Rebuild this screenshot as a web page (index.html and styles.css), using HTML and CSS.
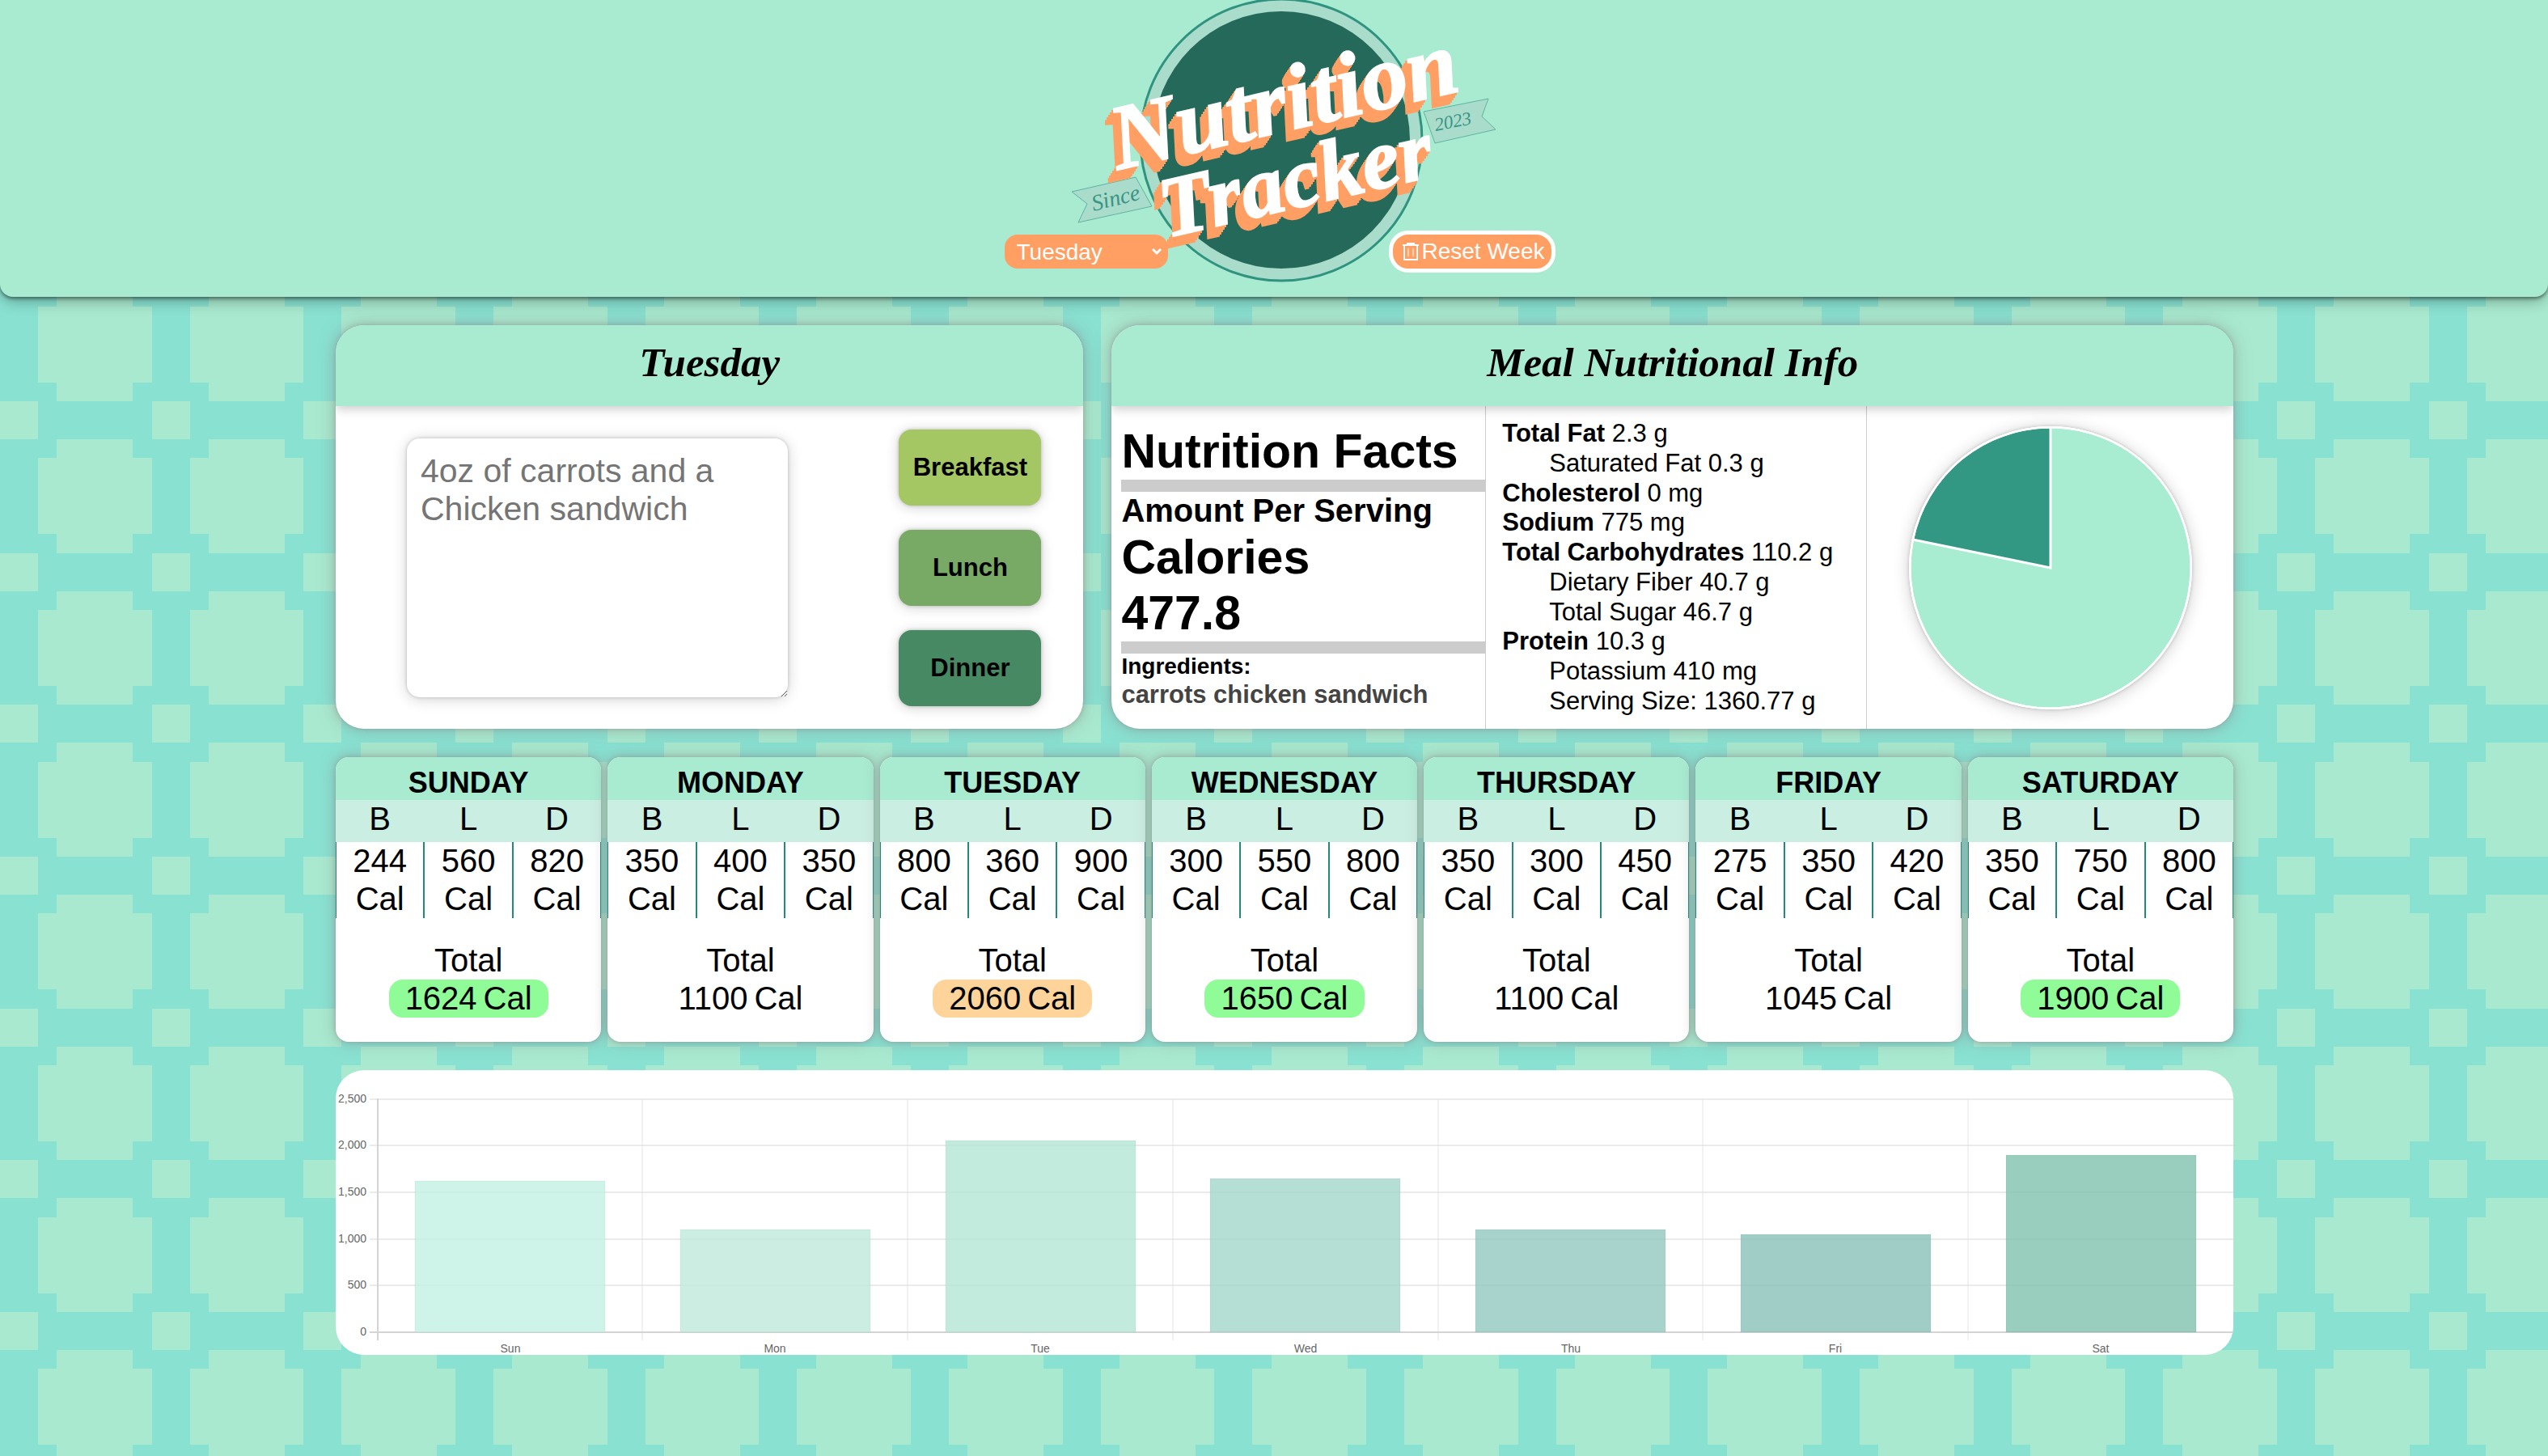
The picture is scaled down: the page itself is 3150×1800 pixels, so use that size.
FILE: index.html
```html
<!DOCTYPE html>
<html lang="en">
<head>
  <meta charset="utf-8">
  <meta name="viewport" content="width=device-width, initial-scale=1">
  <title>Nutrition Tracker</title>
  <link rel="stylesheet" href="styles.css">
</head>
<body>
  <header class="site-header">
    <svg class="logo" viewBox="1405 0 354 349" role="img" aria-label="Nutrition Tracker, since 2023">
      <g class="ribbon">
        <path d="M1325 237 L1404 219 L1424 255 L1333 275 L1344 252 Z"/>
        <path d="M1760 138 L1840 122 L1832 144 L1849 160 L1774 177 Z"/>
      </g>
      <circle class="logo-ring" cx="1584" cy="173" r="174"/>
      <circle class="logo-disc" cx="1584" cy="173" r="159"/>
      <g class="logo-word">
        <text font-size="114" transform="translate(1382 210) rotate(-13)">Nutrition</text>
        <text font-size="106" transform="translate(1442 294) rotate(-13)">Tracker</text>
      </g>
      <text class="logo-small" font-size="28" transform="translate(1352 261) rotate(-14)">Since</text>
      <text class="logo-small" font-size="23" transform="translate(1775 162) rotate(-11)">2023</text>
    </svg>
    <div class="controls">
      <select class="day-select" aria-label="Day">
        <option>Sunday</option>
        <option>Monday</option>
        <option selected>Tuesday</option>
        <option>Wednesday</option>
        <option>Thursday</option>
        <option>Friday</option>
        <option>Saturday</option>
      </select>
      <button class="reset" type="button">
        <svg class="reset-icon" viewBox="0 0 20 22" aria-hidden="true">
          <path d="M0 3H20M6 3V1H14V3M2 3V21H18V3"/>
          <path class="reset-slots" d="M7 7V17M13 7V17"/>
        </svg>
        Reset Week
      </button>
    </div>
  </header>

  <main class="page">
    <div class="top-row">
      <section class="card">
        <h2 class="card-title">Tuesday</h2>
        <form class="entry">
          <textarea class="meal-input" aria-label="Meal" placeholder="4oz of carrots and a Chicken sandwich"></textarea>
          <div class="meal-buttons">
            <button class="meal-button breakfast" type="button">Breakfast</button>
            <button class="meal-button lunch" type="button">Lunch</button>
            <button class="meal-button dinner" type="button">Dinner</button>
          </div>
        </form>
      </section>

      <section class="card">
        <h2 class="card-title">Meal Nutritional Info</h2>
        <div class="info">
          <div class="facts">
            <h3 class="facts-big facts-rule">Nutrition Facts</h3>
            <p class="facts-medium">Amount Per Serving</p>
            <p class="facts-big">Calories</p>
            <p class="facts-big facts-rule">477.8</p>
            <p class="facts-small">Ingredients:</p>
            <p class="facts-list">carrots chicken sandwich</p>
          </div>
          <ul class="nutrients">
            <li><b>Total Fat</b> 2.3 g</li>
            <li class="sub">Saturated Fat 0.3 g</li>
            <li><b>Cholesterol</b> 0 mg</li>
            <li><b>Sodium</b> 775 mg</li>
            <li><b>Total Carbohydrates</b> 110.2 g</li>
            <li class="sub">Dietary Fiber 40.7 g</li>
            <li class="sub">Total Sugar 46.7 g</li>
            <li><b>Protein</b> 10.3 g</li>
            <li class="sub">Potassium 410 mg</li>
            <li class="sub">Serving Size: 1360.77 g</li>
          </ul>
          <div class="pie-cell">
            <svg class="pie" viewBox="0 0 350 350" role="img" aria-label="Calories chart">
              <circle cx="175" cy="175" r="174" fill="#a8ecd2"/>
              <path d="M175 175 L4.6 140 A174 174 0 0 1 175 1 Z" fill="#329883"/>
              <circle cx="175" cy="175" r="174" fill="none"/>
            </svg>
          </div>
        </div>
      </section>
    </div>

    <div class="week">
      <section class="day">
        <h3 class="day-name">SUNDAY</h3>
        <table class="meals">
          <thead><tr><th>B</th><th>L</th><th>D</th></tr></thead>
          <tbody><tr><td>244<br>Cal</td><td>560<br>Cal</td><td>820<br>Cal</td></tr></tbody>
        </table>
        <p class="total-label">Total</p>
        <p class="total good"><span>1624</span><span>Cal</span></p>
      </section>
      <section class="day">
        <h3 class="day-name">MONDAY</h3>
        <table class="meals">
          <thead><tr><th>B</th><th>L</th><th>D</th></tr></thead>
          <tbody><tr><td>350<br>Cal</td><td>400<br>Cal</td><td>350<br>Cal</td></tr></tbody>
        </table>
        <p class="total-label">Total</p>
        <p class="total"><span>1100</span><span>Cal</span></p>
      </section>
      <section class="day">
        <h3 class="day-name">TUESDAY</h3>
        <table class="meals">
          <thead><tr><th>B</th><th>L</th><th>D</th></tr></thead>
          <tbody><tr><td>800<br>Cal</td><td>360<br>Cal</td><td>900<br>Cal</td></tr></tbody>
        </table>
        <p class="total-label">Total</p>
        <p class="total over"><span>2060</span><span>Cal</span></p>
      </section>
      <section class="day">
        <h3 class="day-name">WEDNESDAY</h3>
        <table class="meals">
          <thead><tr><th>B</th><th>L</th><th>D</th></tr></thead>
          <tbody><tr><td>300<br>Cal</td><td>550<br>Cal</td><td>800<br>Cal</td></tr></tbody>
        </table>
        <p class="total-label">Total</p>
        <p class="total good"><span>1650</span><span>Cal</span></p>
      </section>
      <section class="day">
        <h3 class="day-name">THURSDAY</h3>
        <table class="meals">
          <thead><tr><th>B</th><th>L</th><th>D</th></tr></thead>
          <tbody><tr><td>350<br>Cal</td><td>300<br>Cal</td><td>450<br>Cal</td></tr></tbody>
        </table>
        <p class="total-label">Total</p>
        <p class="total"><span>1100</span><span>Cal</span></p>
      </section>
      <section class="day">
        <h3 class="day-name">FRIDAY</h3>
        <table class="meals">
          <thead><tr><th>B</th><th>L</th><th>D</th></tr></thead>
          <tbody><tr><td>275<br>Cal</td><td>350<br>Cal</td><td>420<br>Cal</td></tr></tbody>
        </table>
        <p class="total-label">Total</p>
        <p class="total"><span>1045</span><span>Cal</span></p>
      </section>
      <section class="day">
        <h3 class="day-name">SATURDAY</h3>
        <table class="meals">
          <thead><tr><th>B</th><th>L</th><th>D</th></tr></thead>
          <tbody><tr><td>350<br>Cal</td><td>750<br>Cal</td><td>800<br>Cal</td></tr></tbody>
        </table>
        <p class="total-label">Total</p>
        <p class="total good"><span>1900</span><span>Cal</span></p>
      </section>
    </div>

    <section class="chart">
      <svg class="chart-plot" viewBox="0 0 2346 352" role="img" aria-label="Calories per day">
        <g class="grid-lines">
          <path d="M42 36H2346M42 93H2346M42 151H2346M42 209H2346M42 266H2346"/>
          <path class="thin" d="M379 35V334M707 35V334M1035 35V334M1363 35V334M1690 35V334M2018 35V334"/>
        </g>
        <path class="axis" d="M42 324H2346M52 35V334"/>
        <g class="bars">
          <rect x="98" y="137" width="235" height="187" fill="#c2f1e3"/>
          <rect x="426" y="197" width="235" height="127" fill="#bfeadb"/>
          <rect x="754" y="87" width="235" height="237" fill="#b4e6d5"/>
          <rect x="1081" y="134" width="235" height="190" fill="#a3d7c9"/>
          <rect x="1409" y="197" width="235" height="127" fill="#91c8bf"/>
          <rect x="1737" y="203" width="235" height="121" fill="#88c2b9"/>
          <rect x="2065" y="105" width="235" height="219" fill="#80c1ae"/>
        </g>
        <g class="labels-y">
          <text x="38" y="40">2,500</text>
          <text x="38" y="97">2,000</text>
          <text x="38" y="155">1,500</text>
          <text x="38" y="213">1,000</text>
          <text x="38" y="270">500</text>
          <text x="38" y="328">0</text>
        </g>
        <g class="labels-x">
          <text x="216" y="349">Sun</text>
          <text x="543" y="349">Mon</text>
          <text x="871" y="349">Tue</text>
          <text x="1199" y="349">Wed</text>
          <text x="1527" y="349">Thu</text>
          <text x="1854" y="349">Fri</text>
          <text x="2182" y="349">Sat</text>
        </g>
      </svg>
    </section>
  </main>
</body>
</html>
```
FILE: styles.css
```css
* {
  box-sizing: border-box;
}

body {
  margin: 0;
  min-height: 100vh;
  color: #000;
  font-family: "Liberation Sans", Arial, sans-serif;
  background-color: #89e1d1;
  background-image: url("data:image/svg+xml,%3Csvg xmlns='http://www.w3.org/2000/svg' viewBox='0 0 24 24' shape-rendering='crispEdges'%3E%3Cdefs%3E%3Cpath id='t' fill='%23a8e9cf' d='M0 0h2v2H0zM3 2h4v1h1v4H7v1H3V7H2V3h1z'/%3E%3C/defs%3E%3Cuse href='%23t'/%3E%3Cuse href='%23t' x='8'/%3E%3Cuse href='%23t' x='16'/%3E%3Cuse href='%23t' y='8'/%3E%3Cuse href='%23t' x='8' y='8'/%3E%3Cuse href='%23t' x='16' y='8'/%3E%3Cuse href='%23t' y='16'/%3E%3Cuse href='%23t' x='8' y='16'/%3E%3Cuse href='%23t' x='16' y='16'/%3E%3C/svg%3E");
  background-size: 563px 563px;
  background-position: 0 496px;
}

h2, h3, p, ul {
  margin: 0;
  padding: 0;
}

button, select, textarea {
  font-family: inherit;
}

/* Header */

.site-header {
  display: grid;
  justify-items: center;
  padding: 0 0 18px 14px;
  background: #a8ebd1;
  border-radius: 0 0 16px 16px;
  box-shadow: 0 2px 4px rgba(0, 0, 0, 0.45), 0 7px 18px -2px rgba(0, 0, 0, 0.3);
}

.logo {
  grid-area: 1 / 1;
  width: 354px;
  height: 349px;
  overflow: visible;
}

.logo-ring {
  fill: #a9dccb;
  stroke: #2f9380;
  stroke-width: 3;
}

.logo-disc {
  fill: #25695a;
}

.ribbon {
  fill: #a9dccb;
  stroke: #5fb3a3;
  stroke-width: 1;
}

.logo-small {
  fill: #3a9483;
  font-family: "Liberation Serif", serif;
  font-style: italic;
}

.logo-word {
  fill: #fff;
  stroke: #fff;
  stroke-width: 2;
  font-family: "Liberation Serif", serif;
  font-style: italic;
  font-weight: 700;
  filter: drop-shadow(-2px 3px 0 #ff9f64) drop-shadow(-2px 3px 0 #ff9f64) drop-shadow(-2px 3px 0 #ff9f64) drop-shadow(-2px 3px 0 #ff9f64) drop-shadow(-2px 3px 0 #ff9f64);
}

.controls {
  grid-area: 1 / 1;
  align-self: end;
  display: flex;
  align-items: center;
  gap: 273px;
  margin-bottom: 12px;
  z-index: 1;
}

.day-select {
  width: 202px;
  height: 42px;
  padding: 0 15px;
  appearance: none;
  border: 0;
  border-radius: 16px;
  color: #fff;
  font-size: 28px;
  background: #ff9f64 url("data:image/svg+xml,%3Csvg xmlns='http://www.w3.org/2000/svg' viewBox='0 0 14 10'%3E%3Cpath d='M2 2l5 5 5-5' fill='none' stroke='white' stroke-width='3'/%3E%3C/svg%3E") no-repeat right 7px center / 14px 10px;
}

.reset {
  display: flex;
  align-items: center;
  gap: 4px;
  height: 52px;
  padding: 0 8px 0 12px;
  border: 5px solid #fff;
  border-radius: 24px;
  color: #fff;
  font-size: 28px;
  background: #ff9f64;
}

.reset-icon {
  width: 20px;
  height: 22px;
  fill: none;
  stroke: #fff;
  stroke-width: 2;
}

.reset-slots {
  stroke-width: 1;
}

/* Page */

.page {
  display: grid;
  gap: 35px;
  padding: 35px 389px 35px 415px;
}

.top-row {
  display: grid;
  grid-template-columns: 2fr 3fr;
  gap: 35px;
}

.card {
  display: flex;
  flex-direction: column;
  overflow: hidden;
  border-radius: 35px;
  background: #fff;
  box-shadow: 0 0 4px rgba(136, 136, 136, 0.5), 0 0 20px rgba(136, 136, 136, 0.6);
}

.card-title {
  position: relative;
  line-height: 92px;
  padding-bottom: 8px;
  text-align: center;
  font-family: "Liberation Serif", serif;
  font-size: 51px;
  font-style: italic;
  font-weight: 700;
  background: #a8ebd1;
  box-shadow: 0 4px 12px rgba(0, 0, 0, 0.2);
}

.entry {
  display: flex;
  flex: 1;
  align-items: center;
  justify-content: space-between;
  padding: 29px 52px 28px 88px;
}

.meal-input {
  width: 471px;
  height: 320px;
  padding: 17px;
  border: 0;
  border-radius: 16px;
  font-size: 41px;
  line-height: 47px;
  box-shadow: 0 0 4px rgba(0, 0, 0, 0.2), 0 2px 18px rgba(0, 0, 0, 0.18);
}

.meal-input::placeholder {
  color: #757575;
}

.meal-buttons {
  display: grid;
  gap: 30px;
}

.meal-button {
  width: 176px;
  height: 94px;
  padding: 0;
  border: 0;
  border-radius: 16px;
  color: #000;
  font-size: 31px;
  font-weight: 700;
  box-shadow: 0 0 4px rgba(0, 0, 0, 0.2), 0 2px 16px rgba(0, 0, 0, 0.18);
}

.breakfast {
  background: #a4c663;
}

.lunch {
  background: #78a965;
}

.dinner {
  background: #468962;
}

.info {
  display: grid;
  flex: 1;
  grid-template-columns: 463fr 471fr 453fr;
}

.facts {
  padding: 22px 0 0 12px;
  border-right: 1px solid #ccc;
  font-weight: 700;
}

.facts-big {
  font-size: 59px;
  line-height: 69px;
}

.facts-rule {
  border-bottom: 15px solid #ccc;
}

.facts-medium {
  font-size: 40px;
  line-height: 47px;
}

.facts-small {
  font-size: 28px;
  line-height: 32px;
}

.facts-list {
  color: #444;
  font-size: 31px;
  line-height: 37px;
}

.nutrients {
  display: flex;
  flex-direction: column;
  justify-content: space-between;
  padding: 16px 0 16px 20px;
  border-right: 1px solid #ccc;
  list-style: none;
  font-size: 31px;
  line-height: 36px;
}

.sub {
  padding-left: 58px;
}

.pie-cell {
  display: grid;
  place-items: center;
}

.pie {
  width: 350px;
  height: 350px;
  border-radius: 50%;
  stroke: #fff;
  stroke-width: 3;
  box-shadow: 0 0 4px rgba(0, 0, 0, 0.2), 0 2px 20px rgba(0, 0, 0, 0.2);
}

/* Week */

.week {
  display: grid;
  grid-template-columns: repeat(7, 1fr);
  gap: 8px;
}

.day {
  display: flex;
  flex-direction: column;
  align-items: center;
  overflow: hidden;
  padding-bottom: 30px;
  border-radius: 16px;
  background: #fff;
  font-size: 40px;
  line-height: 47px;
  box-shadow: 0 0 4px rgba(136, 136, 136, 0.5), 0 0 18px rgba(136, 136, 136, 0.6);
}

.day-name {
  align-self: stretch;
  padding-top: 10px;
  text-align: center;
  font-size: 36px;
  line-height: 43px;
  background: #a8ebd1;
}

.meals {
  width: 100%;
  table-layout: fixed;
  border-spacing: 0;
  text-align: center;
}

.meals th {
  padding: 0 0 5px;
  font-weight: 400;
  background: #cbeee2;
}

.meals td {
  padding: 0;
  border: solid #208c77;
  border-width: 0 1px;
}

.total-label {
  margin-top: 29px;
}

.total {
  display: flex;
  gap: 8px;
  padding: 0 20px;
  border-radius: 17px;
}

.good {
  background: #8ffc98;
}

.over {
  background: #ffd49b;
}

/* Chart */

.chart {
  overflow: hidden;
  border-radius: 35px;
  background: #fff;
}

.chart-plot {
  display: block;
  width: 100%;
}

.grid-lines {
  fill: none;
  stroke: #ebebeb;
  stroke-width: 2;
}

.thin {
  stroke: #e4e4e4;
  stroke-width: 1;
}

.axis {
  fill: none;
  stroke: #d4d4d4;
  stroke-width: 2;
}

.bars {
  fill-opacity: 0.8;
  stroke: rgba(0, 0, 0, 0.05);
  stroke-width: 1;
}

.labels-y,
.labels-x {
  fill: #666;
  font-size: 14px;
}

.labels-y {
  text-anchor: end;
}

.labels-x {
  text-anchor: middle;
}
```
